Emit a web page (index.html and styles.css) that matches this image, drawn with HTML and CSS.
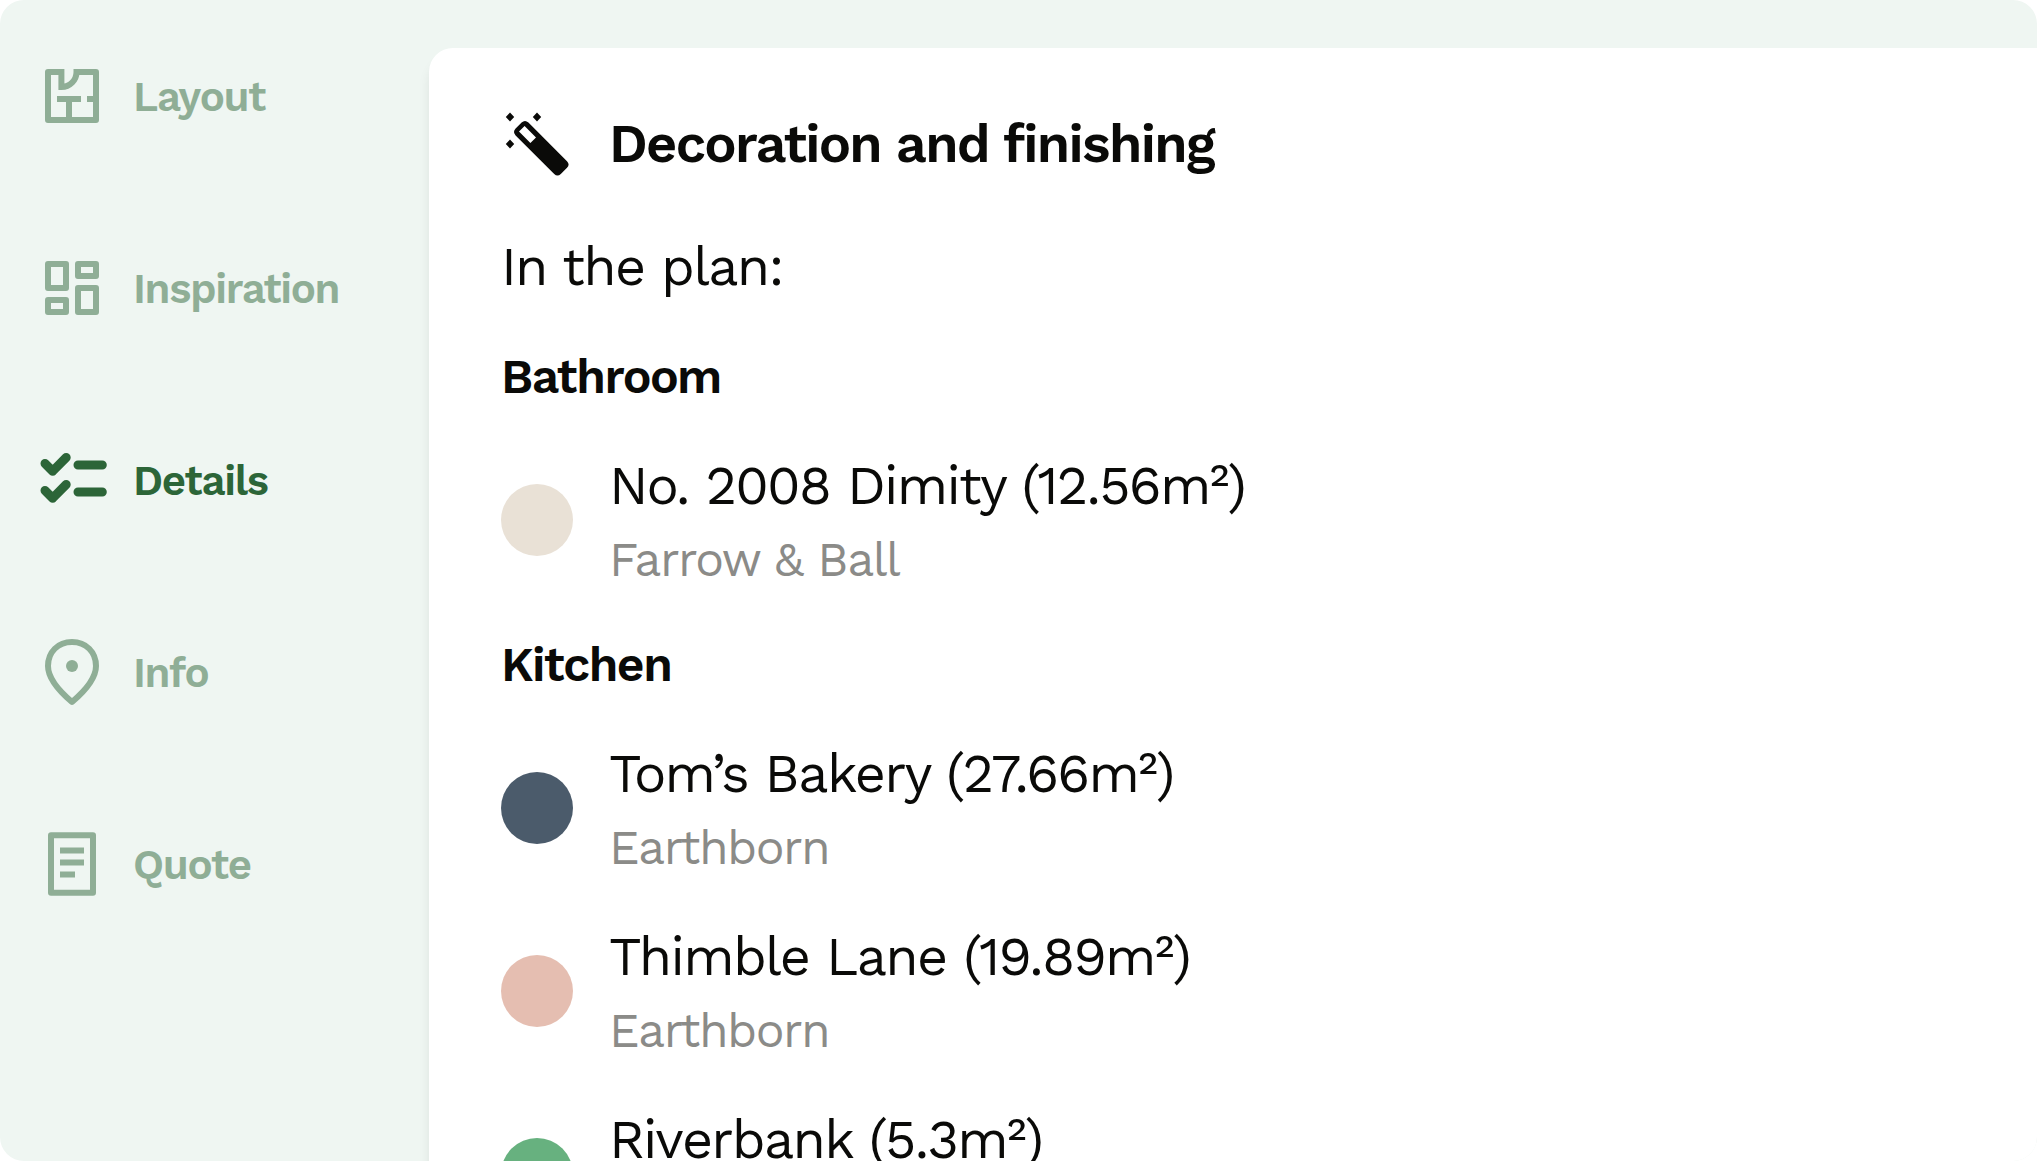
FILE: index.html
```html
<!DOCTYPE html>
<html lang="en">
<head>
  <meta charset="UTF-8" />
  <meta name="viewport" content="width=device-width, initial-scale=1.0" />
  <title>Decoration and finishing</title>
  <link rel="stylesheet" href="styles.css">
</head>
<body>

  <div class="app">
    <nav class="sidebar">
      <a class="nav-item">
        <svg class="icon" viewBox="0 0 72 72" fill="none" stroke="currentColor" stroke-width="6">
          <path d="M25.4 12H12V60H60V12H40.5" stroke-linejoin="round" />
          <path d="M25.4 9V27A15 15 0 0 0 40.5 12V9" />
          <path d="M21 39H45M33 39V60M51 39H60" />
        </svg>
        <span>Layout</span>
      </a>

      <a class="nav-item">
        <svg class="icon" viewBox="0 0 72 72" fill="none" stroke="currentColor" stroke-width="6" stroke-linejoin="round">
          <rect x="12" y="12" width="18" height="24" />
          <rect x="42" y="12" width="18" height="12" />
          <rect x="12" y="48" width="18" height="12" />
          <rect x="42" y="36" width="18" height="24" />
        </svg>
        <span>Inspiration</span>
      </a>

      <a class="nav-item active">
        <svg class="icon" viewBox="0 0 72 72" fill="none" stroke="currentColor" stroke-width="9" stroke-linecap="round" stroke-linejoin="round">
          <path d="M9 19.5L16.7 27.2L30.2 13.5" />
          <path d="M9 46.5L16.7 54.2L30.2 40.5" />
          <path d="M42 21H66.3M42 48H66.3" />
        </svg>
        <span>Details</span>
      </a>

      <a class="nav-item">
        <svg class="icon" viewBox="0 0 72 72" fill="none" stroke="currentColor" stroke-width="6" stroke-linejoin="round">
          <path d="M36 66C26 57.5 12 43 12 30C12 16 22 6 36 6C50 6 60 16 60 30C60 43 46 57.5 36 66Z" />
          <circle cx="36" cy="30" r="6" fill="currentColor" stroke="none" />
        </svg>
        <span>Info</span>
      </a>

      <a class="nav-item">
        <svg class="icon" viewBox="0 0 72 72" fill="none" stroke="currentColor" stroke-width="6" stroke-linejoin="round">
          <rect x="15" y="7.3" width="42" height="57.4" />
          <path d="M24 22.5H48M24 34.5H48M24 46.5H39" />
        </svg>
        <span>Quote</span>
      </a>
    </nav>

    <main class="card">
      <header class="card-header">
        <svg class="icon" viewBox="0 0 72 72" fill="currentColor">
          <path d="M9 4.5L13.2 9L9 13.5L4.8 9ZM36 4.5L40.2 9L36 13.5L31.8 9ZM9 31.5L13.2 36L9 40.5L4.8 36Z" />
          <path fill-rule="evenodd" d="M20.6 14.6Q24 11.4 27.4 14.6L66 53.2Q69.2 56.5 66 59.8L59.8 66Q56.5 69.2 53.2 66L14.6 27.4Q11.4 24 14.6 20.6ZM23.6 18L18 23.6L29.4 35L35 29.4Z" />
        </svg>
        <h1>Decoration and finishing</h1>
      </header>

      <p class="intro">In the plan:</p>

      <section class="room">
        <h2>Bathroom</h2>
        <div class="paint">
          <span class="swatch dimity"></span>
          <div class="info">
            <p class="name">No. 2008 Dimity (12.56m²)</p>
            <p class="brand">Farrow &amp; Ball</p>
          </div>
        </div>
      </section>

      <section class="room">
        <h2>Kitchen</h2>
        <div class="paint">
          <span class="swatch bakery"></span>
          <div class="info">
            <p class="name">Tom’s Bakery (27.66m²)</p>
            <p class="brand">Earthborn</p>
          </div>
        </div>
        <div class="paint">
          <span class="swatch thimble"></span>
          <div class="info">
            <p class="name">Thimble Lane (19.89m²)</p>
            <p class="brand">Earthborn</p>
          </div>
        </div>
        <div class="paint">
          <span class="swatch riverbank"></span>
          <div class="info">
            <p class="name">Riverbank (5.3m²)</p>
          </div>
        </div>
      </section>
    </main>
  </div>

</body>
</html>
```
FILE: styles.css
```css
* {
  box-sizing: border-box;
}

body {
  margin: 0;
  background-color: #ffffff;
  color: #0a0a08;
  font-family: 'Work Sans', Inter, sans-serif;
  overflow: hidden;
}

h1, h2, p {
  margin: 0;
  letter-spacing: -0.032em;
}

.app {
  display: flex;
  height: 100vh;
  background-color: #eff6f2;
  border-radius: 24px;
  overflow: hidden;
}

.icon {
  width: 72px;
  height: 72px;
  flex-shrink: 0;
}

/* Sidebar */
.sidebar {
  width: 429px;
  flex-shrink: 0;
  padding: 60px 0 0 36px;
  display: flex;
  flex-direction: column;
  gap: 120px;
}

.nav-item {
  display: flex;
  align-items: center;
  gap: 25px;
  height: 72px;
  color: #8fae96;
  font-size: 42px;
  font-weight: 600;
  letter-spacing: -0.032em;
}

.nav-item.active {
  color: #2c6538;
}

/* Card runs off the right and bottom edges */
.card {
  flex: 1;
  margin-top: 48px;
  padding: 60px 72px 0;
  height: 1400px;
  background-color: #ffffff;
  border-top-left-radius: 24px;
  box-shadow: 0 12px 12px rgba(0, 0, 0, 0.08);
}

.card-header {
  display: flex;
  align-items: center;
  gap: 36px;
}

.card-header h1 {
  font-size: 54px;
  font-weight: 600;
  line-height: 72px;
}

.intro {
  margin-top: 46px;
  font-size: 54px;
  line-height: 81px;
}

.room {
  margin-top: 35px;
}

.room h2 {
  font-size: 48px;
  font-weight: 600;
  line-height: 70px;
}

.paint {
  display: flex;
  align-items: center;
  gap: 36px;
  margin-top: 35px;
}

.room h2 + .paint {
  margin-top: 34px;
}

.room + .room {
  margin-top: 36px;
}

.swatch {
  width: 72px;
  height: 72px;
  flex-shrink: 0;
  border-radius: 50%;
}

.dimity { background-color: #e9e1d6; }
.bakery { background-color: #4b5b6b; }
.thimble { background-color: #e5beb1; }
.riverbank { background-color: #67b17f; }

.info {
  min-height: 148px;
}

.name {
  font-size: 54px;
  line-height: 80px;
}

.brand {
  color: #8b8b88;
  font-size: 48px;
  line-height: 68px;
}
```
